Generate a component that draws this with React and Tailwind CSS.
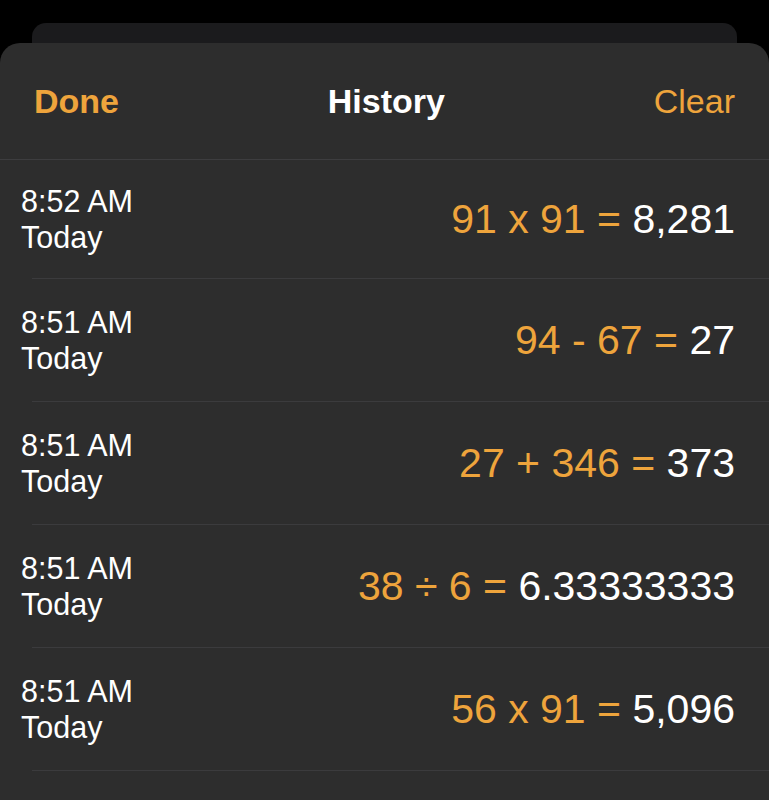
import React from 'react';

// Calculator history entries, newest first
const HISTORY = [
  { time: '8:52 AM', day: 'Today', expr: '91 x 91', result: '8,281' },
  { time: '8:51 AM', day: 'Today', expr: '94 - 67', result: '27' },
  { time: '8:51 AM', day: 'Today', expr: '27 + 346', result: '373' },
  { time: '8:51 AM', day: 'Today', expr: '38 ÷ 6', result: '6.33333333' },
  { time: '8:51 AM', day: 'Today', expr: '56 x 91', result: '5,096' },
];

function HistoryRow({ item, first }) {
  return (
    <div className={first ? 'h-[119px] flex flex-col' : 'h-[123px] flex flex-col'}>
      <div className="flex-1 flex items-center justify-between pl-[21px] pr-[34px]">
        <div className="text-[30.5px] leading-[36px] text-white">
          <div>{item.time}</div>
          <div>{item.day}</div>
        </div>
        <div className="text-[41px] leading-none whitespace-nowrap">
          <span className="text-[#eea43c]">{item.expr} = </span>
          <span className="text-white">{item.result}</span>
        </div>
      </div>
      <div className="ml-[32px] h-px bg-[#3b3b3d]" />
    </div>
  );
}

export default function App() {
  return (
    <div className="h-[800px] bg-black overflow-hidden flex flex-col font-['Liberation_Sans',Arial,sans-serif]">
      {/* Stacked card peeking out behind the sheet */}
      <div className="mt-[23px] mx-[32px] h-[20px] rounded-t-[14px] bg-[#1b1b1d]" />

      {/* History sheet */}
      <div className="flex-1 bg-[#2d2d2d] rounded-t-[20px]">
        <div className="h-[116px] flex items-center justify-between px-[34px] text-[34px]">
          <span className="font-semibold text-[#eea43c]">Done</span>
          <span className="font-bold text-white">History</span>
          <span className="text-[#eea43c]">Clear</span>
        </div>
        <div className="h-px bg-[#3d3d3f]" />

        {HISTORY.map((item, i) => (
          <HistoryRow key={i} item={item} first={i === 0} />
        ))}
      </div>
    </div>
  );
}
